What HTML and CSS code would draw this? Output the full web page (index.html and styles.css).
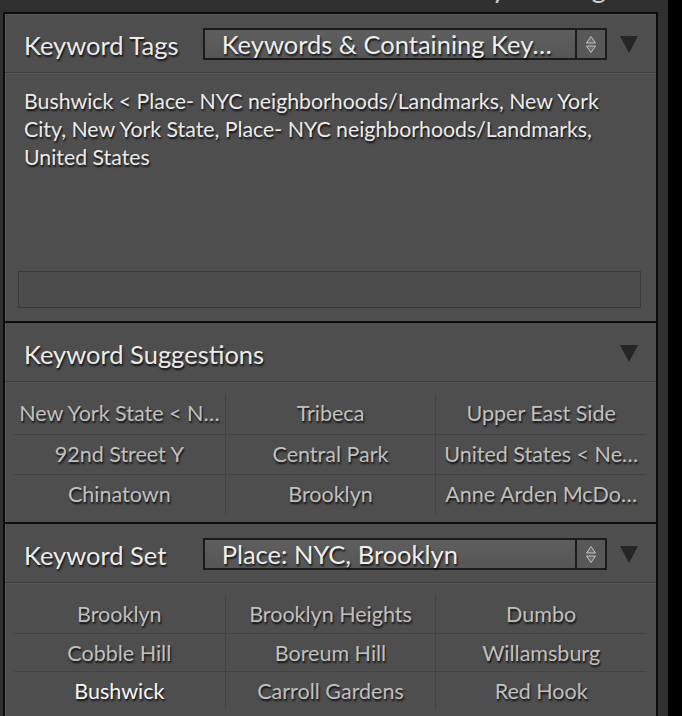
FILE: index.html
```html
<!DOCTYPE html>
<html>
<head>
<meta charset="utf-8">
<link rel="stylesheet" href="styles.css">
</head>
<body>
<div class="frame">
  <div class="topbar"><span class="topbar-text">Keywording</span></div>
  <div class="panel">
    <section class="section">
      <div class="head">
        <span class="title">Keyword Tags</span>
        <div class="select">
          <span class="select-text">Keywords &amp; Containing Key…</span>
          <span class="stepper">
            <svg width="12" height="19" viewBox="0 0 12 19"><path d="M6 1.5 L10.5 8 H1.5 Z" fill="#6c6c6c" stroke="#c4c4c4" stroke-width="1"/><path d="M1.5 11 H10.5 L6 17.5 Z" fill="#6c6c6c" stroke="#c4c4c4" stroke-width="1"/></svg>
          </span>
        </div>
        <span class="collapse"></span>
      </div>
      <div class="tags-body">
        <p class="tags-text">Bushwick &lt; Place- NYC neighborhoods/Landmarks, New York City, New York State, Place- NYC neighborhoods/Landmarks, United States</p>
        <div class="tag-input"></div>
      </div>
    </section>
    <section class="section sep">
      <div class="head">
        <span class="title">Keyword Suggestions</span>
        <span class="spacer"></span>
        <span class="collapse"></span>
      </div>
      <div class="grid grid-sugg">
        <div class="cell">New York State &lt; N…</div>
        <div class="cell">Tribeca</div>
        <div class="cell">Upper East Side</div>
        <div class="cell">92nd Street Y</div>
        <div class="cell">Central Park</div>
        <div class="cell">United States &lt; Ne…</div>
        <div class="cell">Chinatown</div>
        <div class="cell">Brooklyn</div>
        <div class="cell">Anne Arden McDo…</div>
      </div>
    </section>
    <section class="section sep">
      <div class="head">
        <span class="title">Keyword Set</span>
        <div class="select">
          <span class="select-text">Place: NYC, Brooklyn</span>
          <span class="stepper">
            <svg width="12" height="19" viewBox="0 0 12 19"><path d="M6 1.5 L10.5 8 H1.5 Z" fill="#6c6c6c" stroke="#c4c4c4" stroke-width="1"/><path d="M1.5 11 H10.5 L6 17.5 Z" fill="#6c6c6c" stroke="#c4c4c4" stroke-width="1"/></svg>
          </span>
        </div>
        <span class="collapse"></span>
      </div>
      <div class="grid grid-set">
        <div class="cell">Brooklyn</div>
        <div class="cell">Brooklyn Heights</div>
        <div class="cell">Dumbo</div>
        <div class="cell">Cobble Hill</div>
        <div class="cell">Boreum Hill</div>
        <div class="cell">Willamsburg</div>
        <div class="cell active">Bushwick</div>
        <div class="cell">Carroll Gardens</div>
        <div class="cell">Red Hook</div>
      </div>
    </section>
  </div>
</div>
</body>
</html>
```

FILE: styles.css
```css
html, body {
  margin: 0;
  padding: 0;
  background: #000;
  width: 682px;
  height: 716px;
  overflow: hidden;
}

.frame {
  width: 668px;
  height: 716px;
  box-sizing: border-box;
  padding: 0 10px 0 3px;
  background: #303030;
  display: flex;
  flex-direction: column;
  font-family: Lato, "Noto Sans", sans-serif;
}

.topbar {
  height: 12px;
  flex: none;
  overflow: hidden;
  text-align: right;
  padding-right: 52px;
}

.topbar-text {
  display: block;
  margin-top: -30px;
  font-size: 28px;
  line-height: 34px;
  color: #cfcfcf;
}

.panel {
  flex: 1;
  border: 2px solid #0c0c0c;
  border-bottom: none;
  background: #4e4e4e;
  box-shadow: inset 1px 1px 0 #5a5a5a;
}

.section.sep {
  border-top: 2px solid #0c0c0c;
}

.head {
  height: 58px;
  border-bottom: 1px solid #3f3f3f;
  box-shadow: 0 1px 0 #555;
  display: flex;
  align-items: center;
  padding-left: 19px;
  padding-right: 18px;
}

.title {
  width: 179px;
  font-size: 25.5px;
  line-height: 30px;
  padding-top: 3px;
  color: #ebebeb;
  text-shadow: 1px 2px 2px rgba(0, 0, 0, 0.8);
  white-space: nowrap;
}

.spacer {
  flex: 1;
}

.select {
  width: 405px;
  height: 32px;
  margin-top: 2px;
  box-sizing: border-box;
  border: 2px solid #1b1b1b;
  background: linear-gradient(#5e5e5e, #565656);
  display: flex;
  align-items: center;
}

.select-text {
  flex: 1;
  padding-left: 17px;
  font-size: 25.5px;
  line-height: 28px;
  color: #ededed;
  text-shadow: 1px 2px 2px rgba(0, 0, 0, 0.8);
  white-space: nowrap;
}

.stepper {
  width: 28px;
  height: 28px;
  border-left: 2px solid #1b1b1b;
  background: #585858;
  display: flex;
  align-items: center;
  justify-content: center;
}

.stepper svg {
  display: block;
}

.collapse {
  width: 0;
  height: 0;
  margin-left: 13px;
  margin-top: 2px;
  border-left: 9px solid transparent;
  border-right: 9px solid transparent;
  border-top: 17px solid #262626;
}

.tags-body {
  height: 248px;
  box-sizing: border-box;
  padding: 14px 15px 13px 13px;
  display: flex;
  flex-direction: column;
}

.tags-text {
  margin: 0 0 0 6px;
  font-size: 21.3px;
  line-height: 28px;
  color: #ebebeb;
  text-shadow: 1px 2px 2px rgba(0, 0, 0, 0.8);
  flex: 1;
}

.tag-input {
  height: 35px;
  border: 1px solid #3a3a3a;
  background: #4c4c4c;
}

.grid {
  display: grid;
  grid-template-columns: repeat(3, 1fr);
  margin: 0 10px 0 9px;
}

.grid-sugg {
  padding: 12px 0 8px;
  grid-auto-rows: 40px;
}

.grid-set {
  padding: 12px 0 0;
  grid-auto-rows: 38px;
}

.cell {
  display: block;
  text-align: center;
  font-size: 21.5px;
  line-height: 38px;
  color: #c0c0c0;
  text-shadow: 1px 2px 2px rgba(0, 0, 0, 0.8);
  white-space: nowrap;
  min-width: 0;
  border-left: 1px solid #424242;
  border-top: 1px solid #424242;
}

.grid-sugg .cell {
  line-height: 39px;
}

.cell:nth-child(3n+1) {
  border-left: none;
}

.cell:nth-child(-n+3) {
  border-top: none;
}

.cell.active {
  color: #f7f7f7;
}
```
